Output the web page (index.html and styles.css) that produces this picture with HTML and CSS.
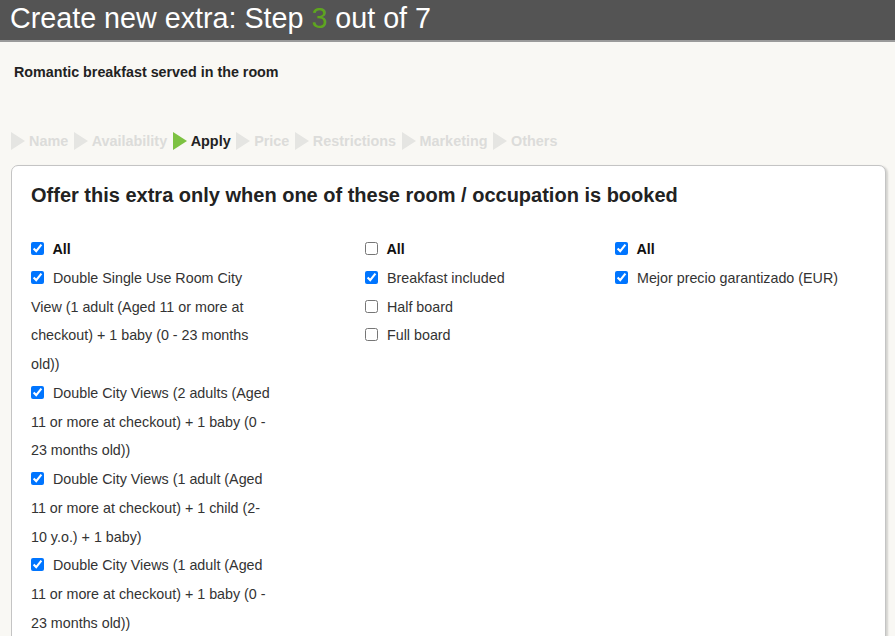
FILE: index.html
```html
<!DOCTYPE html>
<html lang="en">
<head>
    <meta charset="utf-8">
    <title>Create new extra</title>
    <link rel="stylesheet" href="styles.css">
</head>
<body>

    <div class="topbar">
        <h1>Create new extra: Step <span class="step-now">3</span> out of 7</h1>
    </div>

    <p class="extra-name">Romantic breakfast served in the room</p>

    <ul class="steps">
        <li>Name</li>
        <li>Availability</li>
        <li class="current">Apply</li>
        <li>Price</li>
        <li>Restrictions</li>
        <li>Marketing</li>
        <li>Others</li>
    </ul>

    <div class="panel">
        <h2>Offer this extra only when one of these room / occupation is booked</h2>

        <div class="columns">
            <div class="col col-rooms">
                <label class="all"><input type="checkbox" checked> All</label>
                <label><input type="checkbox" checked> Double Single Use Room City View (1 adult (Aged 11 or more at checkout) + 1 baby (0 - 23 months old))</label>
                <label><input type="checkbox" checked> Double City Views (2 adults (Aged 11 or more at checkout) + 1 baby (0 - 23 months old))</label>
                <label><input type="checkbox" checked> Double City Views (1 adult (Aged 11 or more at checkout) + 1 child (2-10 y.o.) + 1 baby)</label>
                <label><input type="checkbox" checked> Double City Views (1 adult (Aged 11 or more at checkout) + 1 baby (0 - 23 months old))</label>
            </div>
            <div class="col">
                <label class="all"><input type="checkbox"> All</label>
                <label><input type="checkbox" checked> Breakfast included</label>
                <label><input type="checkbox"> Half board</label>
                <label><input type="checkbox"> Full board</label>
            </div>
            <div class="col">
                <label class="all"><input type="checkbox" checked> All</label>
                <label><input type="checkbox" checked> Mejor precio garantizado (EUR)</label>
            </div>
        </div>
    </div>

</body>
</html>
```

FILE: styles.css
```css
body {
    margin: 0;
    font-family: Arial, 'Liberation Sans', sans-serif;
    background-color: #f9f8f4;
    color: #222;
    overflow: hidden;
}

.topbar {
    background-color: #545454;
    border-bottom: 2px solid #9a9a9a;
    height: 40px;
    padding-left: 10px;
}

.topbar h1 {
    margin: 0;
    font-weight: normal;
    font-size: 28.7px;
    line-height: 36px;
    color: #fff;
}

.step-now {
    color: #5ea51e;
}

.extra-name {
    margin: 23px 0 0 14px;
    font-size: 14.3px;
    font-weight: bold;
    line-height: 15px;
}

.steps {
    list-style: none;
    margin: 51px 0 0 11px;
    padding: 0;
    display: flex;
    height: 20px;
    align-items: center;
}

.steps li {
    display: flex;
    align-items: center;
    font-size: 14.4px;
    font-weight: bold;
    color: #dcdcda;
    margin-right: 5.5px;
}

.steps li::before {
    content: "";
    border-left: 14px solid #e5e5e2;
    border-top: 9px solid transparent;
    border-bottom: 9px solid transparent;
    margin-right: 4px;
}

.steps li.current {
    color: #222;
}

.steps li.current::before {
    border-left-color: #7dc242;
}

.panel {
    margin: 14px 9px 0 11px;
    background: #fff;
    border: 1px solid #c4c4c4;
    border-radius: 7px 7px 0 0;
    box-shadow: 2px 1px 2px rgba(0, 0, 0, 0.15);
    padding: 16px 19px 0 19px;
    height: 500px;
}

.panel h2 {
    margin: 0 0 27px 0;
    font-size: 20px;
    line-height: 26px;
}

.columns {
    display: grid;
    grid-template-columns: 334px 250px 1fr;
}

.col label {
    display: block;
    font-size: 14.3px;
    line-height: 28.75px;
    color: #333;
}

.col-rooms label {
    width: 242px;
}

.col label.all {
    font-weight: bold;
    color: #111;
}

.col input {
    margin: 0 5px 0 0;
    width: 13px;
    height: 13px;
    vertical-align: -1px;
}
```
